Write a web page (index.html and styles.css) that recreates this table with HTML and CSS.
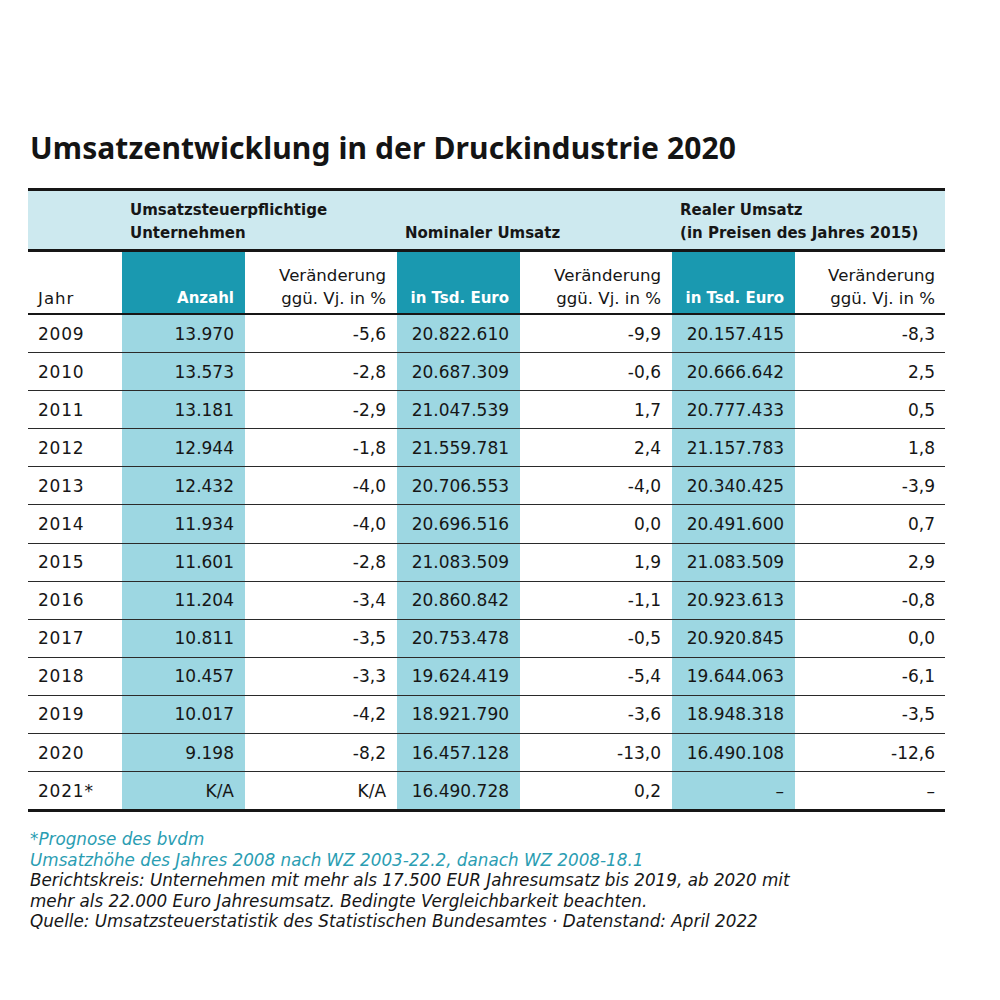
FILE: index.html
```html
<!DOCTYPE html>
<html lang="de">
<head>
<meta charset="utf-8">
<link rel="stylesheet" href="styles.css">
</head>
<body>
<div class="page">
  <h1 class="title">Umsatzentwicklung in der Druckindustrie 2020</h1>
  <table class="data">
    <colgroup>
      <col class="c-year"><col class="c-num"><col class="c-chg"><col class="c-num"><col class="c-chg"><col class="c-num"><col class="c-chg2">
    </colgroup>
    <thead>
      <tr class="group">
        <th></th>
        <th colspan="2">Umsatzsteuerpflichtige<br>Unternehmen</th>
        <th colspan="2">Nominaler Umsatz</th>
        <th colspan="2">Realer Umsatz<br>(in Preisen des Jahres 2015)</th>
      </tr>
      <tr class="sub">
        <th class="year">Jahr</th>
        <th class="hl">Anzahl</th>
        <th class="chg">Veränderung<br>ggü. Vj. in %</th>
        <th class="hl">in Tsd. Euro</th>
        <th class="chg">Veränderung<br>ggü. Vj. in %</th>
        <th class="hl">in Tsd. Euro</th>
        <th class="chg last-col">Veränderung<br>ggü. Vj. in %</th>
      </tr>
    </thead>
    <tbody>
      <tr><td>2009</td><td class="hl">13.970</td><td>-5,6</td><td class="hl">20.822.610</td><td>-9,9</td><td class="hl">20.157.415</td><td>-8,3</td></tr>
      <tr><td>2010</td><td class="hl">13.573</td><td>-2,8</td><td class="hl">20.687.309</td><td>-0,6</td><td class="hl">20.666.642</td><td>2,5</td></tr>
      <tr><td>2011</td><td class="hl">13.181</td><td>-2,9</td><td class="hl">21.047.539</td><td>1,7</td><td class="hl">20.777.433</td><td>0,5</td></tr>
      <tr><td>2012</td><td class="hl">12.944</td><td>-1,8</td><td class="hl">21.559.781</td><td>2,4</td><td class="hl">21.157.783</td><td>1,8</td></tr>
      <tr><td>2013</td><td class="hl">12.432</td><td>-4,0</td><td class="hl">20.706.553</td><td>-4,0</td><td class="hl">20.340.425</td><td>-3,9</td></tr>
      <tr><td>2014</td><td class="hl">11.934</td><td>-4,0</td><td class="hl">20.696.516</td><td>0,0</td><td class="hl">20.491.600</td><td>0,7</td></tr>
      <tr><td>2015</td><td class="hl">11.601</td><td>-2,8</td><td class="hl">21.083.509</td><td>1,9</td><td class="hl">21.083.509</td><td>2,9</td></tr>
      <tr><td>2016</td><td class="hl">11.204</td><td>-3,4</td><td class="hl">20.860.842</td><td>-1,1</td><td class="hl">20.923.613</td><td>-0,8</td></tr>
      <tr><td>2017</td><td class="hl">10.811</td><td>-3,5</td><td class="hl">20.753.478</td><td>-0,5</td><td class="hl">20.920.845</td><td>0,0</td></tr>
      <tr><td>2018</td><td class="hl">10.457</td><td>-3,3</td><td class="hl">19.624.419</td><td>-5,4</td><td class="hl">19.644.063</td><td>-6,1</td></tr>
      <tr><td>2019</td><td class="hl">10.017</td><td>-4,2</td><td class="hl">18.921.790</td><td>-3,6</td><td class="hl">18.948.318</td><td>-3,5</td></tr>
      <tr><td>2020</td><td class="hl">9.198</td><td>-8,2</td><td class="hl">16.457.128</td><td>-13,0</td><td class="hl">16.490.108</td><td>-12,6</td></tr>
      <tr class="last"><td>2021*</td><td class="hl">K/A</td><td>K/A</td><td class="hl">16.490.728</td><td>0,2</td><td class="hl">–</td><td>–</td></tr>
    </tbody>
  </table>
  <div class="notes">
    <p class="teal">*Prognose des bvdm</p>
    <p class="teal">Umsatzhöhe des Jahres 2008 nach WZ 2003-22.2, danach WZ 2008-18.1</p>
    <p>Berichtskreis: Unternehmen mit mehr als 17.500 EUR Jahresumsatz bis 2019, ab 2020 mit<br>mehr als 22.000 Euro Jahresumsatz. Bedingte Vergleichbarkeit beachten.</p>
    <p>Quelle: Umsatzsteuerstatistik des Statistischen Bundesamtes · Datenstand: April 2022</p>
  </div>
</div>
</body>
</html>
```

FILE: styles.css
```css
html, body {
  margin: 0;
  padding: 0;
  background: #ffffff;
}
body {
  font-family: "DejaVu Sans", "Liberation Sans", sans-serif;
  color: #161616;
}
.page {
  padding: 128px 55px 0 28px;
}
.title {
  margin: 0 0 20px 2px;
  font-family: "Noto Sans", "Lato", sans-serif;
  font-size: 30px;
  font-weight: 700;
  line-height: 40px;
  letter-spacing: 0.1px;
  color: #141414;
}
.data {
  width: 917px;
  border-collapse: collapse;
  table-layout: fixed;
  border-top: 3px solid #161616;
  border-bottom: 3px solid #161616;
}
.c-year { width: 94px; }
.c-num { width: 123px; }
.c-chg { width: 152px; }
.c-chg2 { width: 150px; }

.group th {
  background: #cde9ef;
  height: 54px;
  padding: 0 0 4px 8px;
  text-align: left;
  vertical-align: bottom;
  font-size: 15px;
  font-weight: 700;
  line-height: 23px;
  border-bottom: 3px solid #161616;
}
.sub th {
  height: 58px;
  padding: 0 11px 3px 10px;
  text-align: right;
  vertical-align: bottom;
  font-size: 16.6px;
  font-weight: 400;
  line-height: 23px;
  border-bottom: 2px solid #161616;
}
.sub th.year {
  text-align: left;
  letter-spacing: 1px;
}
.sub th.hl {
  background: #1a99b0;
  color: #ffffff;
  font-weight: 700;
  font-size: 15px;
}
.sub th.last-col {
  padding-right: 10px;
}
tbody td {
  height: 37.1px;
  padding: 0 11px 0 10px;
  text-align: right;
  font-size: 17px;
  line-height: 20px;
  border-bottom: 1px solid #2a2a2a;
}
tbody tr.last td {
  border-bottom: none;
}
tbody td:first-child {
  text-align: left;
  letter-spacing: 0.8px;
}
tbody td:last-child {
  padding-right: 10px;
}
tbody td.hl {
  background: #9dd7e2;
}
.notes {
  margin: 17px 0 0 2px;
  font-style: italic;
  font-size: 16.8px;
  line-height: 20.5px;
  color: #161616;
}
.notes p {
  margin: 0;
}
.notes .teal {
  color: #2a9db2;
}
```
